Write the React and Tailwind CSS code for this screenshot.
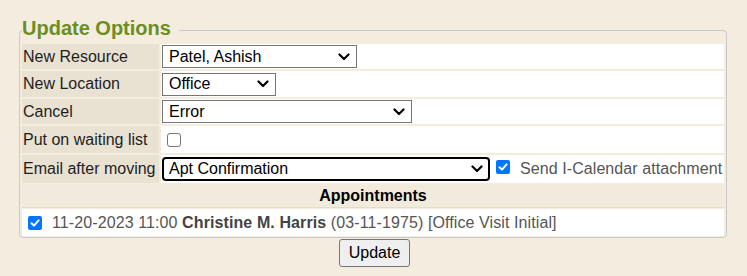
import React from 'react'

function Chevron() {
  return (
    <svg width="12" height="8" viewBox="0 0 12 8" className="shrink-0">
      <path d="M1.5 1.5 L6 6 L10.5 1.5" fill="none" stroke="#000" strokeWidth="2.2" strokeLinecap="round" strokeLinejoin="round" />
    </svg>
  )
}

function FakeSelect({ value, width, focused }) {
  const base = focused
    ? 'border-2 border-black rounded-[4px] h-[24px] pl-[5px] pr-[5px]'
    : 'border border-[#767676] h-[23px] pl-[6px] pr-[6px]'
  return (
    <div className={`flex items-center justify-between bg-white text-black ${base}`} style={{ width }}>
      <span className="leading-none">{value}</span>
      <Chevron />
    </div>
  )
}

function Checkbox({ checked }) {
  if (!checked) {
    return <div className="w-[14px] h-[14px] shrink-0 rounded-[3px] border border-[#767676] bg-white" />
  }
  return (
    <div className="w-[14px] h-[14px] shrink-0 rounded-[2px] bg-[#0075ff] flex items-center justify-center">
      <svg width="10" height="10" viewBox="0 0 10 10">
        <path d="M1.5 5.2 L4 7.6 L8.6 2.4" fill="none" stroke="#fff" strokeWidth="2" strokeLinecap="round" strokeLinejoin="round" />
      </svg>
    </div>
  )
}

function Row({ label, height, children }) {
  return (
    <div className="flex gap-[2px]" style={{ height }}>
      <div className="w-[137px] shrink-0 bg-[#e9e2d3] flex items-center pl-px text-[#1e1e1e]">{label}</div>
      <div className="flex-1 bg-white flex items-center pl-px">{children}</div>
    </div>
  )
}

export default function App() {
  return (
    <div className="min-h-screen bg-[#f3ecdf] pt-[17px] text-[16px]" style={{ fontFamily: '"Liberation Sans", Arial, sans-serif' }}>
      <fieldset className="ml-[19px] w-[708px] border border-[#c9c9c9] rounded-[4px] px-[2px] pb-[1px]">
        <legend className="text-[20px] font-bold leading-[23px] text-[#6b8e23] pb-1 pr-2">Update Options</legend>
        <div className="flex flex-col gap-[2px]">
          <Row label="New Resource" height={25}>
            <FakeSelect value="Patel, Ashish" width={195} />
          </Row>
          <Row label="New Location" height={26}>
            <FakeSelect value="Office" width={114} />
          </Row>
          <Row label="Cancel" height={25}>
            <FakeSelect value="Error" width={250} />
          </Row>
          <Row label="Put on waiting list" height={27}>
            <div className="ml-[5px]">
              <Checkbox />
            </div>
          </Row>
          <Row label="Email after moving" height={28}>
            <FakeSelect value="Apt Confirmation" width={328} focused />
            <div className="ml-[6px] self-start mt-[5px]">
              <Checkbox checked />
            </div>
            <span className="ml-[10px] text-[#555] whitespace-nowrap tracking-[0.08px]">Send I-Calendar attachment</span>
          </Row>
        </div>
        <div className="mt-[2px] h-[23px] bg-[#f1ebdd] border-b border-[#e3dcc6] flex items-center justify-center font-bold text-black">
          Appointments
        </div>
        <div className="mt-[1px] h-[27px] bg-white flex items-center">
          <div className="ml-[6px]">
            <Checkbox checked />
          </div>
          <span className="ml-[10px] text-[#555] whitespace-nowrap tracking-[0.1px]">
            11-20-2023 11:00 <b className="text-[#444]">Christine M. Harris</b> (03-11-1975) [Office Visit Initial]
          </span>
        </div>
      </fieldset>
      <div className="flex justify-center mt-px">
        <button className="ml-[2px] h-[28px] px-[9px] bg-[#efefef] border border-[#767676] rounded-[3px] text-black leading-none">
          Update
        </button>
      </div>
    </div>
  )
}
